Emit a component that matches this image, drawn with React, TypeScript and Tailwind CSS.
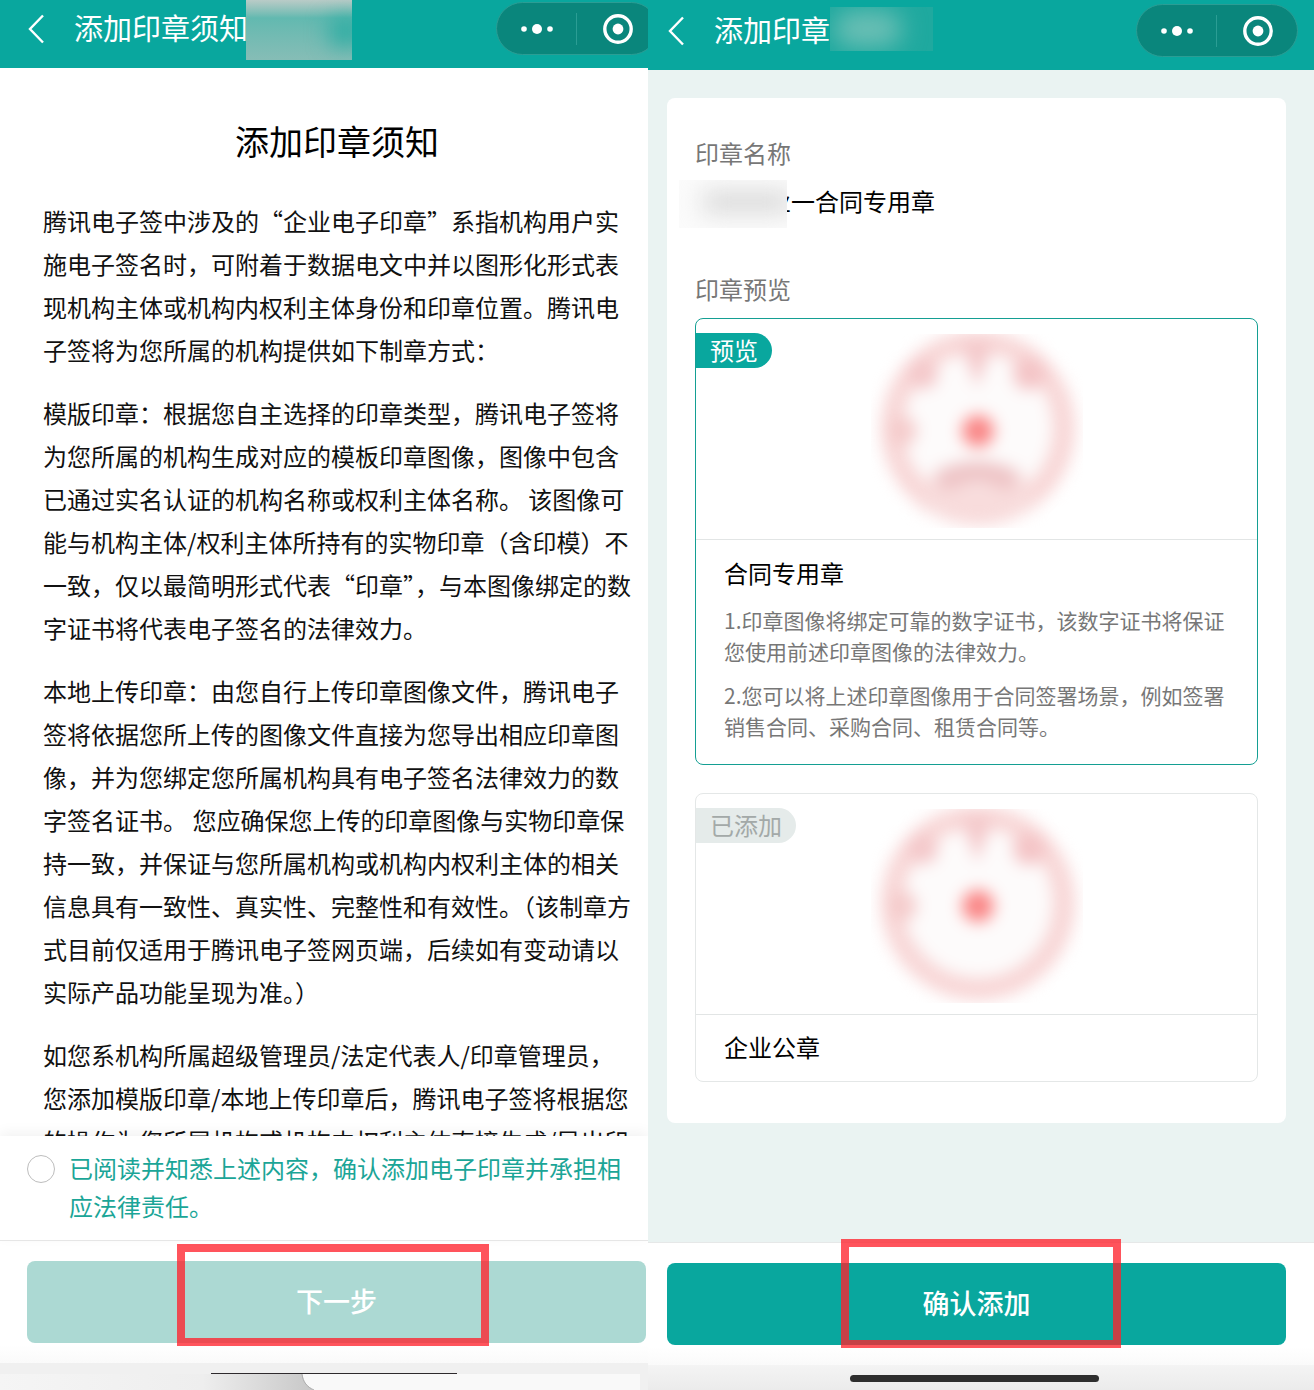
import React, { useState } from "react";

const noticeParagraphs = [
  "腾讯电子签中涉及的“企业电子印章”系指机构用户实施电子签名时，可附着于数据电文中并以图形化形式表现机构主体或机构内权利主体身份和印章位置。腾讯电子签将为您所属的机构提供如下制章方式：",
  "模版印章：根据您自主选择的印章类型，腾讯电子签将为您所属的机构生成对应的模板印章图像，图像中包含已通过实名认证的机构名称或权利主体名称。 该图像可能与机构主体/权利主体所持有的实物印章（含印模）不一致，仅以最简明形式代表“印章”，与本图像绑定的数字证书将代表电子签名的法律效力。",
  "本地上传印章：由您自行上传印章图像文件，腾讯电子签将依据您所上传的图像文件直接为您导出相应印章图像，并为您绑定您所属机构具有电子签名法律效力的数字签名证书。 您应确保您上传的印章图像与实物印章保持一致，并保证与您所属机构或机构内权利主体的相关信息具有一致性、真实性、完整性和有效性。（该制章方式目前仅适用于腾讯电子签网页端，后续如有变动请以实际产品功能呈现为准。）",
  "如您系机构所属超级管理员/法定代表人/印章管理员，您添加模版印章/本地上传印章后，腾讯电子签将根据您的操作为您所属机构或机构内权利主体直接生成/导出印",
];

const contractNotes = [
  "1.印章图像将绑定可靠的数字证书，该数字证书将保证您使用前述印章图像的法律效力。",
  "2.您可以将上述印章图像用于合同签署场景，例如签署销售合同、采购合同、租赁合同等。",
];

function BackButton() {
  return (
    <button type="button" aria-label="返回" className="shrink-0 cursor-pointer">
      <svg width="18" height="30" viewBox="0 0 18 30" fill="none" stroke="white" strokeWidth="2.4">
        <path d="M15 1.5 L2 15 L15 28.5" />
      </svg>
    </button>
  );
}

function Capsule() {
  return (
    <div className="flex h-[53px] w-[162px] shrink-0 items-center rounded-full border border-[#2b9d94] bg-[#0a867c]">
      <button type="button" aria-label="更多" className="flex h-full w-[79px] cursor-pointer items-center justify-center">
        <svg width="34" height="12" viewBox="0 0 34 12" fill="white">
          <circle cx="4" cy="6" r="2.8" />
          <circle cx="17" cy="6" r="5" />
          <circle cx="30" cy="6" r="2.8" />
        </svg>
      </button>
      <span className="h-8 w-px bg-[#2b9d94]" />
      <button type="button" aria-label="关闭" className="flex h-full flex-1 cursor-pointer items-center justify-center pl-0.5">
        <svg width="30" height="30" viewBox="0 0 30 30">
          <circle cx="15" cy="15" r="13.2" fill="none" stroke="white" strokeWidth="3.4" />
          <circle cx="15" cy="15" r="5.4" fill="white" />
        </svg>
      </button>
    </div>
  );
}

function Seal({ id, withCaption }: { id: string; withCaption?: boolean }) {
  return (
    <svg width="212" height="194" viewBox="0 0 212 194" className="overflow-hidden" role="img" aria-label="印章">
      <defs>
        <filter id={id} x="-20%" y="-20%" width="140%" height="140%" colorInterpolationFilters="sRGB">
          <feGaussianBlur stdDeviation="8" />
        </filter>
      </defs>
      <g filter={`url(#${id})`}>
        <circle cx="107" cy="94" r="86" fill="#fdfbfb" stroke="#f8d6d6" strokeWidth="22" />
        <path d="M90 8 H122 L106 54 Z" fill="#f4c8ca" />
        <circle cx="52" cy="40" r="15" fill="#f4c8ca" />
        <circle cx="158" cy="40" r="16" fill="#f4c4c6" />
        <circle cx="31" cy="97" r="15" fill="#f5cccc" />
        {withCaption && (
          <>
            <path d="M52 158 Q105 180 160 158" fill="none" stroke="#f8dcdc" strokeWidth="34" />
            <path d="M68 148 Q107 128 144 148" fill="none" stroke="#eec4c6" strokeWidth="22" />
          </>
        )}
        <circle cx="107" cy="97" r="16" fill="#fa8585" />
      </g>
    </svg>
  );
}

function NoticeScreen() {
  const [agreed, setAgreed] = useState(false);

  return (
    <section className="flex min-w-0 flex-col overflow-hidden bg-white">
      <header className="relative flex h-[68px] shrink-0 items-start bg-[#09a79e] pl-7 pt-0.5 text-white">
        <div className="flex h-[53px] items-center gap-7">
          <BackButton />
          <h1 className="whitespace-nowrap pb-1 text-[29px] leading-10">添加印章须知</h1>
        </div>
        <span className="absolute left-[246px] top-0 h-[60px] w-[106px] overflow-hidden bg-gradient-to-b from-[#b9cbc7] via-[#62b9b0] via-30% to-[#86bdb6]">
          <span className="absolute -right-2 top-5 h-6 w-7 bg-[#12a79d] blur-md" />
        </span>
        <div className="-mr-[10px] ml-auto">
          <Capsule />
        </div>
      </header>

      <main className="min-h-0 flex-1 overflow-hidden pl-[43px] pr-[17px] pt-[49px]">
        <h2 className="text-center text-[34px] leading-[48px] text-black">添加印章须知</h2>
        <div className="mt-[34px] space-y-5 text-2xl leading-[43px] text-[#111]">
          {noticeParagraphs.map((text) => (
            <p key={text}>{text}</p>
          ))}
        </div>
      </main>

      <div className="z-10 shrink-0 border-b border-[#e6e6e6] bg-white pb-[15px] pl-[27px] pr-4 pt-[13px] shadow-[0_-4px_12px_rgba(0,0,0,0.05)]">
        <label className="flex cursor-pointer items-start gap-[14px] text-2xl leading-[38px] text-[#1ba597]">
          <input
            type="checkbox"
            checked={agreed}
            onChange={(e) => setAgreed(e.target.checked)}
            className="mt-[6px] size-7 shrink-0 cursor-pointer appearance-none rounded-full border border-[#bdbdbd] bg-white checked:bg-[#09a79e]"
          />
          <span>已阅读并知悉上述内容，确认添加电子印章并承担相应法律责任。</span>
        </label>
      </div>

      <footer className="shrink-0 bg-gradient-to-b from-white from-85% to-[#fafafa] pb-5 pl-[27px] pr-0.5 pt-5">
        <div className="relative">
          <button
            type="button"
            className="h-[82px] w-full cursor-pointer rounded-lg bg-[#acd9d3] pb-0.5 text-[27px] font-medium text-white"
          >
            下一步
          </button>
          <span className="pointer-events-none absolute -bottom-[3px] -top-[17px] left-[150px] right-[157px] border-8 border-[#ff202b]/77" />
        </div>
      </footer>
      <div className="shrink-0 bg-[#f0f0f0]">
        <div className="pl-5">
          <div className="mx-auto h-[11px] w-[246px] border-b border-[#2e2a2d]" />
        </div>
        <svg width="100%" height="16" viewBox="0 0 648 16" preserveAspectRatio="none" className="block" aria-hidden="true">
          <defs>
            <linearGradient id="edge">
              <stop offset="0" stopColor="#f5f5f5" />
              <stop offset="0.65" stopColor="#eeeeee" />
              <stop offset="1" stopColor="#c8c8c8" />
            </linearGradient>
          </defs>
          <rect width="312" height="16" fill="url(#edge)" />
          <path d="M302 0 C303 8 307 13 314 16 H640 V0 Z" fill="#f9f9f9" />
          <path d="M302 0 C303 8 307 13 314 16" fill="none" stroke="#a8a8a8" />
        </svg>
      </div>
    </section>
  );
}

function AddSealScreen() {
  return (
    <section className="flex min-w-0 flex-col bg-[#eaf3f2]">
      <header className="flex h-[70px] shrink-0 items-start bg-[#09a79e] pl-5 pr-4 pt-1 text-white">
        <div className="flex h-[53px] items-center gap-7">
          <BackButton />
          <h1 className="relative whitespace-nowrap pb-1 text-[29px] leading-10">
            添加印章
            <span className="absolute -top-0.5 left-full h-11 w-[103px] overflow-hidden bg-[#1fa99f]">
              <span className="absolute left-1 top-1 h-9 w-[68px] rounded-full bg-[#6cbfb5] blur-md" />
            </span>
          </h1>
        </div>
        <div className="ml-auto">
          <Capsule />
        </div>
      </header>

      <main className="min-h-0 flex-1 overflow-hidden pl-[19px] pr-7 pt-7">
        <div className="rounded-lg bg-white px-7 pb-[41px] pt-[35px] text-2xl leading-10">
          <h2 className="text-[#777]">印章名称</h2>
          <p className="relative mt-2 pl-[72px] text-black">
            业一合同专用章
            <span className="absolute -left-4 -top-px h-12 w-[108px] overflow-hidden bg-[#fbfbfb]">
              <span className="absolute -right-1 left-6 top-3 h-5 bg-[#d6d6d6] blur-md" />
            </span>
          </p>
          <h2 className="mt-12 text-[#777]">印章预览</h2>

          <article className="mt-[9px] rounded-lg border border-[#149f93]">
            <div className="relative flex h-[221px] justify-center border-b border-[#e2e5e5] pt-[15px]">
              <span className="absolute left-0 top-[14px] rounded-r-full bg-[#09a79e] px-[14px] pb-px text-2xl leading-[34px] text-white">
                预览
              </span>
              <Seal id="contract-seal" withCaption />
            </div>
            <div className="px-7 pb-[22px] pt-[13px]">
              <h3 className="text-black">合同专用章</h3>
              <div className="mt-3 space-y-[13px] text-[21px] leading-[31px] text-[#777]">
                {contractNotes.map((note) => (
                  <p key={note}>{note}</p>
                ))}
              </div>
            </div>
          </article>

          <article className="mt-7 rounded-lg border border-[#e4e7e7]">
            <div className="relative flex h-[221px] justify-center border-b border-[#e2e5e5] pt-[15px]">
              <span className="absolute left-0 top-[14px] rounded-r-full bg-[#e5ebea] px-[14px] pb-px text-2xl leading-[34px] text-[#a3a9a8]">
                已添加
              </span>
              <Seal id="company-seal" />
            </div>
            <div className="px-7 pb-[14px] pt-3">
              <h3 className="text-black">企业公章</h3>
            </div>
          </article>
        </div>
      </main>

      <footer className="shrink-0 border-t border-[#e6e8e8] bg-gradient-to-b from-white from-85% to-[#fafafa] pb-5 pl-[19px] pr-7 pt-5">
        <div className="relative">
          <button
            type="button"
            className="h-[82px] w-full cursor-pointer rounded-lg bg-[#09a79e] pb-0.5 text-[27px] font-medium text-white"
          >
            确认添加
          </button>
          <span className="pointer-events-none absolute -bottom-[3px] -top-6 left-[174px] right-[165px] border-8 border-[#ff202b]/77" />
        </div>
      </footer>
      <div className="shrink-0 bg-gradient-to-b from-[#f4f4f4] to-[#ebebeb] pb-2 pl-[19px] pr-8 pt-[10px]">
        <div className="mx-auto h-[7px] w-[249px] rounded-full bg-[#2e2e2e]" />
      </div>
    </section>
  );
}

export default function App() {
  return (
    <div
      lang="zh-CN"
      className="grid h-screen grid-cols-[648fr_666fr] overflow-hidden bg-white font-['Noto_Sans_CJK_SC',sans-serif]"
    >
      <NoticeScreen />
      <AddSealScreen />
    </div>
  );
}
